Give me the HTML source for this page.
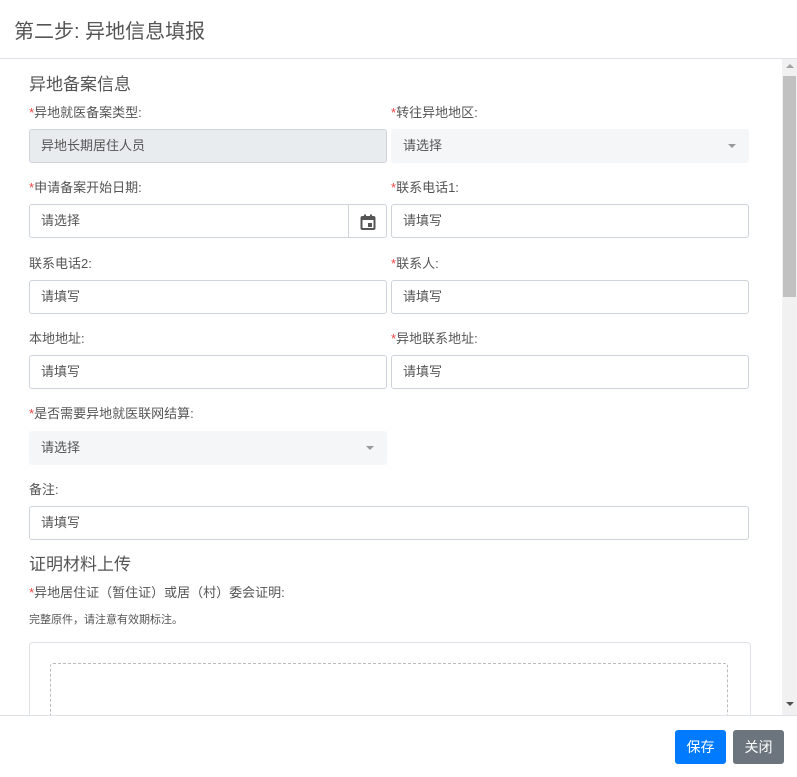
<!DOCTYPE html>
<html><head><meta charset="utf-8"><style>
*{box-sizing:border-box;margin:0;padding:0}
body{width:797px;height:777px;overflow:hidden;background:#fff;font-family:"Liberation Sans","Noto Sans CJK SC",sans-serif;color:#555;position:relative}
.a{position:absolute}
.h{left:14px;top:15px;font-size:20px;color:#555}
.sec{font-size:17px;color:#555}
.lab{font-size:13px;color:#555}
.lab i{color:#e44;font-style:normal}
.in{height:34px;border:1px solid #ced4da;border-radius:3px;font-size:13px;color:#555;padding:0 11px;line-height:32px;background:#fff}
.sel{background:#f5f6f8;border-color:#f5f6f8}
.dis{background:#e9ecef}
.car{position:absolute;right:12px;top:14px;border:4px solid transparent;border-top:4px solid #999;border-bottom:0}
</style></head><body>
<div class="a h">第二步: 异地信息填报</div>
<div class="a" style="left:0;top:58px;width:797px;height:1px;background:#dee2e6"></div>
<div class="a sec" style="left:29px;top:70px">异地备案信息</div>

<div class="a lab" style="left:29px;top:102px"><i>*</i>异地就医备案类型:</div>
<div class="a lab" style="left:391px;top:102px"><i>*</i>转往异地地区:</div>
<div class="a in dis" style="left:29px;top:129px;width:358px">异地长期居住人员</div>
<div class="a in sel" style="left:391px;top:129px;width:358px">请选择<span class="car"></span></div>

<div class="a lab" style="left:29px;top:177px"><i>*</i>申请备案开始日期:</div>
<div class="a lab" style="left:391px;top:177px"><i>*</i>联系电话1:</div>
<div class="a in" style="left:29px;top:204px;width:358px">请选择
<div class="a" style="right:0;top:0;width:38px;height:32px;border-left:1px solid #ced4da"><svg class="a" style="left:11px;top:9px" width="16" height="16" viewBox="0 0 16 16"><rect x="1.5" y="3" width="13" height="12" rx="1" fill="none" stroke="#555" stroke-width="2"/><rect x="1" y="3" width="14" height="3" fill="#555"/><rect x="4" y="0.5" width="2" height="3" fill="#555"/><rect x="10" y="0.5" width="2" height="3" fill="#555"/><rect x="8" y="9" width="4" height="4" fill="#555"/></svg></div></div>
<div class="a in" style="left:391px;top:204px;width:358px">请填写</div>

<div class="a lab" style="left:29px;top:253px">联系电话2:</div>
<div class="a lab" style="left:391px;top:253px"><i>*</i>联系人:</div>
<div class="a in" style="left:29px;top:280px;width:358px">请填写</div>
<div class="a in" style="left:391px;top:280px;width:358px">请填写</div>

<div class="a lab" style="left:29px;top:328px">本地地址:</div>
<div class="a lab" style="left:391px;top:328px"><i>*</i>异地联系地址:</div>
<div class="a in" style="left:29px;top:355px;width:358px">请填写</div>
<div class="a in" style="left:391px;top:355px;width:358px">请填写</div>

<div class="a lab" style="left:29px;top:403px"><i>*</i>是否需要异地就医联网结算:</div>
<div class="a in sel" style="left:29px;top:431px;width:358px">请选择<span class="car"></span></div>

<div class="a lab" style="left:29px;top:479px">备注:</div>
<div class="a in" style="left:29px;top:506px;width:720px">请填写</div>

<div class="a sec" style="left:29px;top:550px">证明材料上传</div>
<div class="a lab" style="left:29px;top:582px"><i>*</i>异地居住证（暂住证）或居（村）委会证明:</div>
<div class="a" style="left:29px;top:611px;font-size:11px;color:#555">完整原件，请注意有效期标注。</div>
<div class="a" style="left:29px;top:642px;width:722px;height:90px;border:1px solid #dee2e6;border-radius:4px"></div>
<div class="a" style="left:50px;top:663px;width:678px;height:70px;border:1px dashed #bbb;border-radius:3px"></div>

<div class="a" style="left:782px;top:59px;width:15px;height:656px;background:#f1f1f1"></div>
<div class="a" style="left:783px;top:76px;width:13px;height:221px;background:#c1c1c1"></div>
<div class="a" style="left:786px;top:64px;border:4px solid transparent;border-bottom:4px solid #a3a3a3;border-top:0"></div>
<div class="a" style="left:786px;top:702px;border:4px solid transparent;border-top:4px solid #505050;border-bottom:0"></div>

<div class="a" style="left:0;top:715px;width:797px;height:62px;background:#fff;border-top:1px solid #dee2e6"></div>
<div class="a" style="left:675px;top:730px;width:51px;height:34px;background:#007bff;border-radius:3px;color:#fff;font-size:14px;line-height:34px;text-align:center">保存</div>
<div class="a" style="left:733px;top:730px;width:51px;height:34px;background:#6c757d;border-radius:3px;color:#fff;font-size:14px;line-height:34px;text-align:center">关闭</div>
</body></html>
